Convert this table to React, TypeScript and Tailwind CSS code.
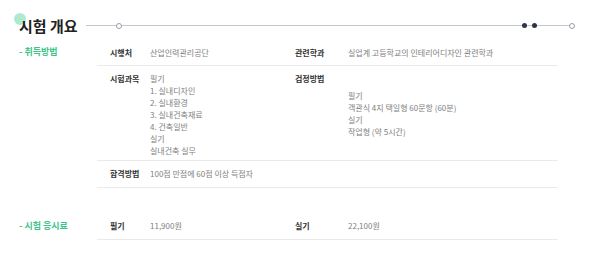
import React from 'react';

const font = { fontFamily: '"Noto Sans CJK KR", "Noto Sans", sans-serif' };

const Label: React.FC<{ children: React.ReactNode; w: string }> = ({ children, w }) => (
  <div className={`${w} shrink-0 font-bold text-[#333]`}>{children}</div>
);

const SectionTitle: React.FC<{ children: React.ReactNode }> = ({ children }) => (
  <div className="w-[97px] shrink-0 pl-[19px] text-[9px] font-bold text-[#3ec48a]">- {children}</div>
);

export default function App() {
  return (
    <div style={font} className="w-[603px] h-[273px] bg-white overflow-hidden">
      {/* header */}
      <div className="relative flex items-center h-[50px] pl-[19px] pr-[31px] pt-[1px]">
        <span className="absolute left-[14px] top-[13px] w-[12px] h-[12px] rounded-full bg-[#a6e8c9] opacity-90" />
        <h2 className="relative text-[15px] font-bold text-[#222] leading-none mr-[8px]">시험 개요</h2>
        <div className="relative flex-1 h-px bg-[#c4c6ce]">
          <span className="absolute left-[30px] -top-[2.5px] w-[6px] h-[6px] rounded-full border border-[#9a9ca6] bg-white" />
          <span className="absolute right-[45px] -top-[2px] w-[5px] h-[5px] rounded-full bg-[#2e3548]" />
          <span className="absolute right-[35px] -top-[2px] w-[5px] h-[5px] rounded-full bg-[#2e3548]" />
          <span className="absolute -right-[3px] -top-[2.5px] w-[6px] h-[6px] rounded-full border border-[#9a9ca6] bg-white" />
        </div>
      </div>

      {/* 취득방법 */}
      <div className="flex text-[8px] leading-[12px] mt-[-11px]">
        <div className="pt-[7px]">
          <SectionTitle>취득방법</SectionTitle>
        </div>
        <div className="w-[461px] text-[#808080]">
          <div className="flex border-b border-[#eaeaea] pt-[8px] pb-[6px]">
            <div className="flex w-[185px] pl-[13px]">
              <Label w="w-[40px]">시행처</Label>
              <div>산업인력관리공단</div>
            </div>
            <div className="flex pl-[13px]">
              <Label w="w-[53px]">관련학과</Label>
              <div>실업계 고등학교의 인테리어디자인 관련학과</div>
            </div>
          </div>
          <div className="flex border-b border-[#eaeaea] pt-[7px] pb-[3px]">
            <div className="flex w-[185px] pl-[13px]">
              <Label w="w-[40px]">시험과목</Label>
              <div>
                <div>필기</div>
                <div>1. 실내디자인</div>
                <div>2. 실내환경</div>
                <div>3. 실내건축재료</div>
                <div>4. 건축일반</div>
                <div>실기</div>
                <div>실내건축 실무</div>
              </div>
            </div>
            <div className="flex pl-[13px]">
              <Label w="w-[53px]">검정방법</Label>
              <div className="pt-[17px]">
                <div>필기</div>
                <div>객관식 4지 택일형 60문항 (60분)</div>
                <div>실기</div>
                <div>작업형 (약 5시간)</div>
              </div>
            </div>
          </div>
          <div className="flex border-b border-[#eaeaea] py-[7px]">
            <div className="flex pl-[13px]">
              <Label w="w-[40px]">합격방법</Label>
              <div>100점 만점에 60점 이상 득점자</div>
            </div>
          </div>
        </div>
      </div>

      {/* 시험 응시료 */}
      <div className="flex text-[8px] leading-[12px] mt-[25px]">
        <div className="pt-[7px]">
          <SectionTitle>시험 응시료</SectionTitle>
        </div>
        <div className="w-[461px] text-[#808080]">
          <div className="flex border-b border-[#eaeaea] py-[7px]">
            <div className="flex w-[185px] pl-[13px]">
              <Label w="w-[40px]">필기</Label>
              <div>11,900원</div>
            </div>
            <div className="flex pl-[13px]">
              <Label w="w-[53px]">실기</Label>
              <div>22,100원</div>
            </div>
          </div>
        </div>
      </div>
    </div>
  );
}
